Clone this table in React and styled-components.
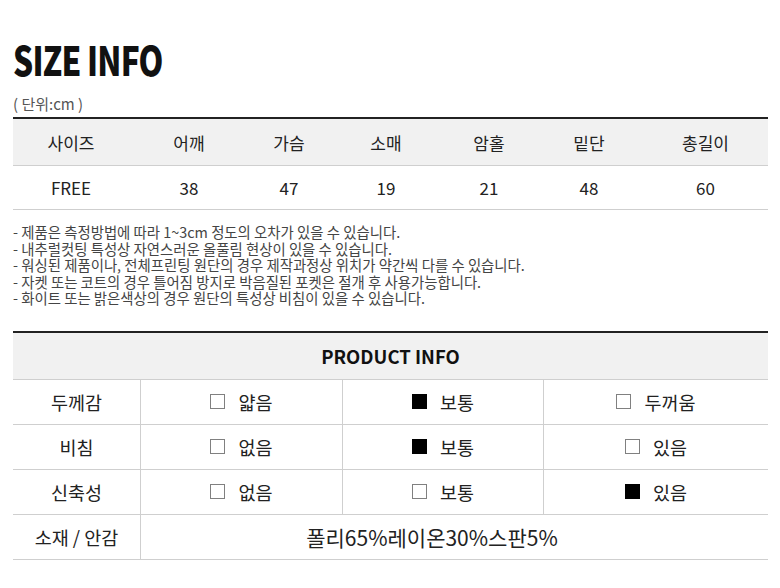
import React from 'react';
import styled, { createGlobalStyle } from 'styled-components';

const GlobalStyle = createGlobalStyle`
  body {
    margin: 0;
    background: #fff;
    font-family: "Noto Sans CJK KR", "Noto Sans", sans-serif;
    color: #222;
  }
`;

const sizeColumns = ['사이즈', '어깨', '가슴', '소매', '암홀', '밑단', '총길이'];
const sizeValues = ['FREE', '38', '47', '19', '21', '48', '60'];

const notes = [
  '- 제품은 측정방법에 따라 1~3cm 정도의 오차가 있을 수 있습니다.',
  '- 내추럴컷팅 특성상 자연스러운 올풀림 현상이 있을 수 있습니다.',
  '- 워싱된 제품이나, 전체프린팅 원단의 경우 제작과정상 위치가 약간씩 다를 수 있습니다.',
  '- 자켓 또는 코트의 경우 틀어짐 방지로 박음질된 포켓은 절개 후 사용가능합니다.',
  '- 화이트 또는 밝은색상의 경우 원단의 특성상 비침이 있을 수 있습니다.',
];

const productRows = [
  { label: '두께감', options: [['얇음', false], ['보통', true], ['두꺼움', false]] },
  { label: '비침', options: [['없음', false], ['보통', true], ['있음', false]] },
  { label: '신축성', options: [['없음', false], ['보통', false], ['있음', true]] },
];

const Page = styled.div`
  width: 755px;
  padding: 35px 0 0 13px;
`;

const Title = styled.h1`
  margin: 0;
  font-size: 40px;
  line-height: 48px;
  font-weight: 900;
  letter-spacing: -1px;
  color: #111;
  transform: scaleX(0.79);
  transform-origin: left center;
`;

const Unit = styled.div`
  margin-top: 13px;
  font-size: 15px;
  line-height: 16px;
  color: #555;
`;

const SizeTable = styled.div`
  margin-top: 5px;
  border-top: 2px solid #222;
  display: grid;
  grid-template-columns: 116px 120px 80px 114px 92px 108px 1fr;
`;

const SizeCell = styled.div`
  display: flex;
  align-items: center;
  justify-content: center;
  height: ${p => (p.$head ? '46px' : '43px')};
  background: ${p => (p.$head ? '#f1f1f1' : '#fff')};
  border-bottom: 1px solid #cfcfcf;
  font-size: 17px;
  color: #222;
`;

const Notes = styled.div`
  margin-top: 14px;
  font-size: 14.4px;
  line-height: 16.5px;
  color: #444;
`;

const ProductTable = styled.div`
  margin-top: 24px;
  border-top: 2px solid #222;
  display: grid;
  grid-template-columns: 128px 202px 201px 1fr;
`;

const ProductHead = styled.div`
  grid-column: 1 / -1;
  height: 46px;
  display: flex;
  align-items: center;
  justify-content: center;
  background: #f1f1f1;
  border-bottom: 1px solid #cfcfcf;
  font-size: 18.5px;
  font-weight: 700;
  color: #111;
`;

const Cell = styled.div`
  box-sizing: border-box;
  height: 45px;
  display: flex;
  align-items: center;
  justify-content: center;
  gap: 13px;
  padding-right: ${p => p.$shift || '0'};
  border-bottom: 1px solid #cfcfcf;
  border-right: ${p => (p.$last ? 'none' : '1px solid #cfcfcf')};
  grid-column: ${p => p.$span || 'auto'};
  font-size: ${p => p.$size || '18.5px'};
  color: #222;
`;

const Box = styled.span`
  width: 15px;
  height: 15px;
  box-sizing: border-box;
  border: 1px solid ${p => (p.$on ? '#000' : '#808080')};
  background: ${p => (p.$on ? '#000' : '#fff')};
`;

export default function App() {
  return (
    <>
      <GlobalStyle />
      <Page>
        <Title>SIZE INFO</Title>
        <Unit>( 단위:cm )</Unit>
        <SizeTable>
          {sizeColumns.map(c => (
            <SizeCell key={c} $head>{c}</SizeCell>
          ))}
          {sizeValues.map((v, i) => (
            <SizeCell key={i}>{v}</SizeCell>
          ))}
        </SizeTable>
        <Notes>
          {notes.map(n => (
            <div key={n}>{n}</div>
          ))}
        </Notes>
        <ProductTable>
          <ProductHead>PRODUCT INFO</ProductHead>
          {productRows.map(row => (
            <React.Fragment key={row.label}>
              <Cell>{row.label}</Cell>
              {row.options.map(([text, on], i) => (
                <Cell key={text + i} $last={i === 2}>
                  <Box $on={on} />
                  {text}
                </Cell>
              ))}
            </React.Fragment>
          ))}
          <Cell>소재 / 안감</Cell>
          <Cell $span="2 / -1" $last $size="21px" $shift="45px">
            폴리65%레이온30%스판5%
          </Cell>
        </ProductTable>
      </Page>
    </>
  );
}
